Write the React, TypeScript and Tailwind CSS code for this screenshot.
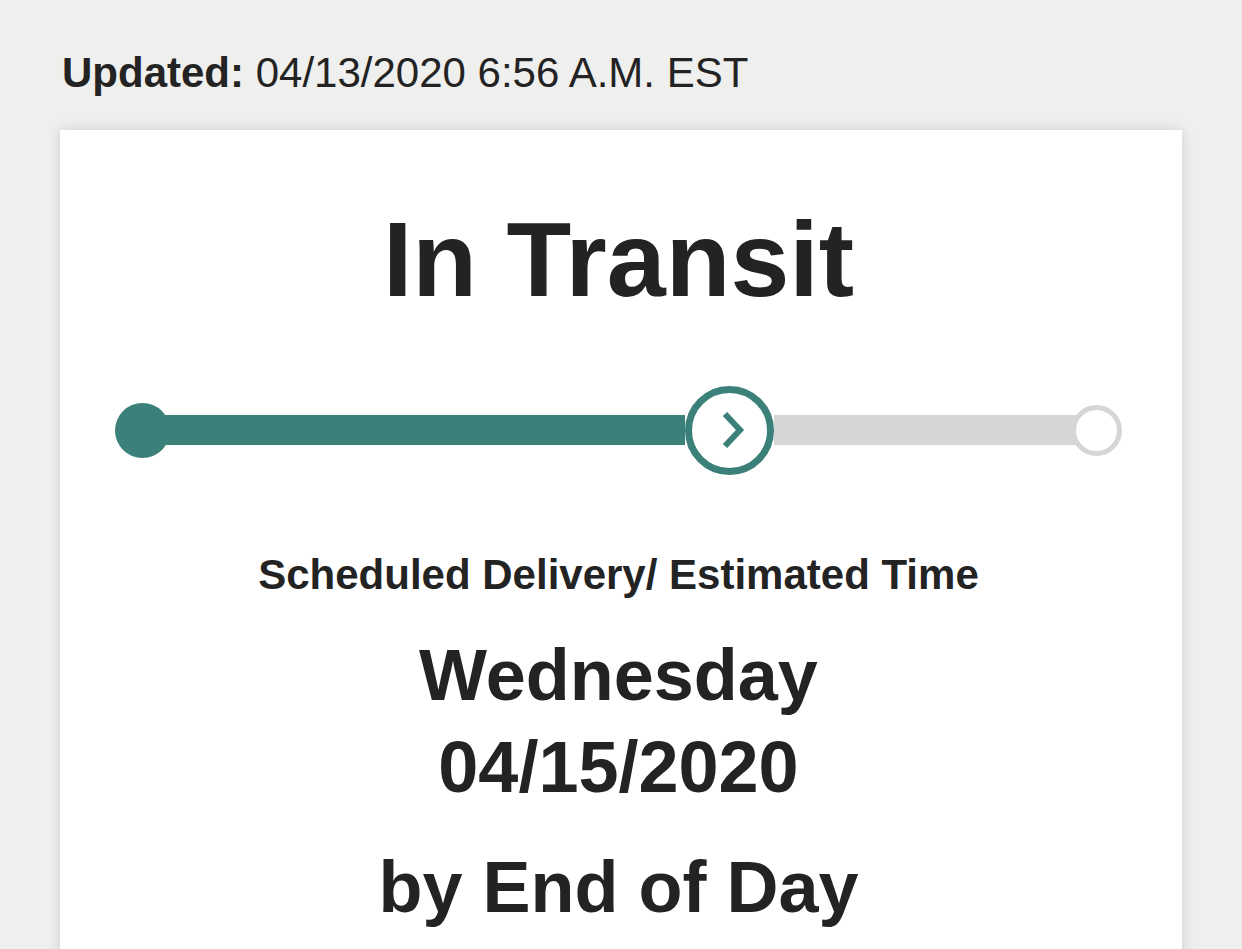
import React from 'react';

const TEAL = 'bg-[#3b8179]';

export default function App() {
    return (
        <div className="min-h-[949px] bg-[#efefee] text-[#232323] font-['Liberation_Sans',Arial,sans-serif] pt-[49px] px-[60px] overflow-hidden">
            <p className="text-[42px] leading-[48px] pl-[2px]">
                <span className="font-bold">Updated:</span> 04/13/2020 6:56 A.M. EST
            </p>

            <div className="mt-[33px] bg-white shadow-[0_0_12px_rgba(0,0,0,0.14)] pt-[76px] pb-[40px] pl-[55px] pr-[60px] min-h-[830px]">
                <h1 className="text-center font-bold text-[106px] leading-none">In Transit</h1>

                {/* Progress tracker */}
                <div className="mt-[73px] flex items-center h-[90px]">
                    <div className={`w-[55px] h-[55px] rounded-full shrink-0 ${TEAL}`} />
                    <div className={`h-[30px] w-[525px] -ml-[10px] shrink-0 ${TEAL}`} />
                    <div className="w-[89px] h-[89px] rounded-full border-[7px] border-[#3b8179] bg-white shrink-0 flex items-center justify-center">
                        <svg width="26" height="38" viewBox="0 0 26 38" className="ml-[8px]">
                            <polyline points="4,3 19,19 4,35" fill="none" stroke="#3b8179" strokeWidth="6" strokeLinejoin="miter" />
                        </svg>
                    </div>
                    <div className="h-[30px] flex-1 -mr-[6px] bg-[#d6d6d6]" />
                    <div className="w-[51px] h-[51px] rounded-full border-[5px] border-[#d6d6d6] bg-white shrink-0" />
                </div>

                <p className="mt-[79px] text-center font-bold text-[42px] leading-none">Scheduled Delivery/ Estimated Time</p>

                <div className="mt-[33px] text-center font-bold text-[72px] leading-[92px]">
                    <p>Wednesday</p>
                    <p>04/15/2020</p>
                </div>
                <p className="mt-[28px] text-center font-bold text-[72px] leading-[92px]">by End of Day</p>
            </div>
        </div>
    );
}
